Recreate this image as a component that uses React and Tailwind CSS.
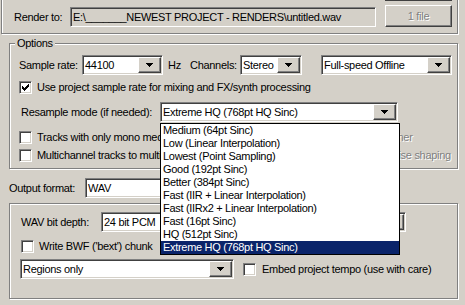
// App.jsx - render settings dialog (classic windows look)
const sunken =
  "border border-t-[#808080] border-l-[#808080] border-r-white border-b-white shadow-[inset_1px_1px_0_#404040,inset_-1px_-1px_0_#d4d0c8]";
const raised =
  "border border-t-white border-l-white border-r-[#404040] border-b-[#404040] shadow-[inset_-1px_-1px_0_#808080] bg-[#d4d0c8]";
const etched = "border border-[#808080] shadow-[inset_1px_1px_0_#fff,1px_1px_0_#fff]";
const disabled = "text-[#808080] [text-shadow:1px_1px_0_#fff]";

const resampleModes = [
  "Medium (64pt Sinc)",
  "Low (Linear Interpolation)",
  "Lowest (Point Sampling)",
  "Good (192pt Sinc)",
  "Better (384pt Sinc)",
  "Fast (IIR + Linear Interpolation)",
  "Fast (IIRx2 + Linear Interpolation)",
  "Fast (16pt Sinc)",
  "HQ (512pt Sinc)",
  "Extreme HQ (768pt HQ Sinc)",
];

function Arrow() {
  return (
    <svg width="7" height="4" viewBox="0 0 7 4" shapeRendering="crispEdges">
      <path d="M0 0h7v1H0zM1 1h5v1H1zM2 2h3v1H2zM3 3h1v1H3z" fill="#000" />
    </svg>
  );
}

function Combo({ value, className = "", children }) {
  return (
    <div className={`relative flex h-[20px] shrink-0 bg-white ${sunken} ${className}`}>
      <span className="flex-1 pl-[2px] leading-[18px] whitespace-nowrap overflow-hidden">{value}</span>
      <div className={`w-[23px] h-[16px] mt-[1px] mr-[1px] flex items-center justify-center ${raised}`}>
        <Arrow />
      </div>
      {children}
    </div>
  );
}

function Check({ checked, off }) {
  return (
    <div
      className={`w-[13px] h-[13px] shrink-0 flex items-start pt-[2px] pl-[2px] ${off ? "bg-[#d4d0c8]" : "bg-white"} ${sunken}`}
    >
      {checked && (
        <svg width="7" height="7" viewBox="0 0 7 7" shapeRendering="crispEdges">
          <path
            d="M0 2h1v3H0zM1 3h1v3H1zM2 4h1v3H2zM3 3h1v3H3zM4 2h1v3H4zM5 1h1v3H5zM6 0h1v3H6z"
            fill="#000"
          />
        </svg>
      )}
    </div>
  );
}

export default function App() {
  return (
    <div className="w-[465px] h-[305px] overflow-hidden bg-[#d4d0c8] text-black text-[11px] tracking-[-0.3px] font-['Liberation_Sans',Arial,sans-serif]">
      {/* render target */}
      <div className={`-mt-[10px] ml-[1px] w-[457px] h-[44px] flex items-start pl-[12px] ${etched}`}>
        <span className="mt-[16px] w-[56px] h-[20px] leading-[20px] whitespace-nowrap">Render to:</span>
        <div className={`mt-[16px] w-[306px] h-[20px] pl-[2px] leading-[18px] whitespace-nowrap overflow-hidden bg-[#d4d0c8] ${sunken}`}>
          E:\_______NEWEST PROJECT - RENDERS\untitled.wav
        </div>
        <div className="ml-[9px] flex flex-col">
          <div className="w-[67px] h-[10px] border-b border-[#404040]" />
          <div className={`mt-[4px] w-[67px] h-[22px] flex items-center justify-center ${raised} ${disabled}`}>
            1 file
          </div>
        </div>
      </div>

      {/* options */}
      <div className={`ml-[9px] mt-[9px] w-[449px] h-[126px] flex flex-col ${etched}`}>
        <div className="-mt-[7px] ml-[5px] px-[2px] w-fit h-[13px] leading-[13px] bg-[#d4d0c8]">Options</div>

        <div className="mt-[5px] pl-[9px] flex items-center h-[20px] whitespace-nowrap">
          <span className="w-[63px]">Sample rate:</span>
          <Combo value="44100" className="w-[81px]" />
          <span className="ml-[5px] w-[22px]">Hz</span>
          <span className="w-[50px]">Channels:</span>
          <Combo value="Stereo" className="w-[62px]" />
          <Combo value="Full-speed Offline" className="ml-[19px] w-[131px]" />
        </div>

        <div className="mt-[6px] pl-[9px] flex items-center h-[13px] whitespace-nowrap">
          <Check checked />
          <span className="ml-[5px]">Use project sample rate for mixing and FX/synth processing</span>
        </div>

        <div className="mt-[8px] pl-[11px] flex items-center h-[20px] whitespace-nowrap">
          <span className="w-[139px]">Resample mode (if needed):</span>
          <Combo value="Extreme HQ (768pt HQ Sinc)" className="w-[238px]">
            <div className="absolute left-[-1px] top-[20px] z-10 w-[240px] h-[132px] border border-black bg-white flex flex-col">
              {resampleModes.map((m, i) => (
                <div
                  key={m}
                  className={`h-[13px] leading-[13px] pl-[2px] whitespace-nowrap ${
                    i === resampleModes.length - 1 ? "bg-[#0a246a] text-white" : ""
                  }`}
                >
                  {m}
                </div>
              ))}
            </div>
          </Combo>
        </div>

        <div className="mt-[9px] pl-[9px] flex items-center h-[13px] whitespace-nowrap">
          <Check />
          <span className="ml-[5px] w-[331px]">Tracks with only mono media to mono files</span>
          <Check off />
          <span className={`ml-[4px] ${disabled}`}>Dither</span>
        </div>

        <div className="mt-[5px] pl-[9px] flex items-center h-[13px] whitespace-nowrap">
          <Check />
          <span className="ml-[5px] w-[331px]">Multichannel tracks to multichannel files</span>
          <Check off />
          <span className={`ml-[4px] ${disabled}`}>Noise shaping</span>
        </div>
      </div>

      {/* output format */}
      <div className="mt-[9px] ml-[9px] flex items-center h-[20px] whitespace-nowrap">
        <span className="w-[76px]">Output format:</span>
        <Combo value="WAV" className="w-[300px]" />
      </div>

      <div className={`ml-[9px] mt-[5px] w-[449px] h-[96px] flex flex-col ${etched}`}>
        <div className="mt-[8px] pl-[11px] flex items-center h-[20px] whitespace-nowrap">
          <span className="w-[80px]">WAV bit depth:</span>
          <Combo value="24 bit PCM" className="w-[305px]" />
        </div>

        <div className="mt-[8px] pl-[11px] flex items-center h-[13px] whitespace-nowrap">
          <Check />
          <span className="ml-[5px]">Write BWF ('bext') chunk</span>
        </div>

        <div className="mt-[6px] pl-[10px] flex items-center h-[20px] whitespace-nowrap">
          <Combo value="Regions only" className="w-[214px]" />
          <div className="ml-[9px]">
            <Check />
          </div>
          <span className="ml-[6px]">Embed project tempo (use with care)</span>
        </div>
      </div>
    </div>
  );
}
